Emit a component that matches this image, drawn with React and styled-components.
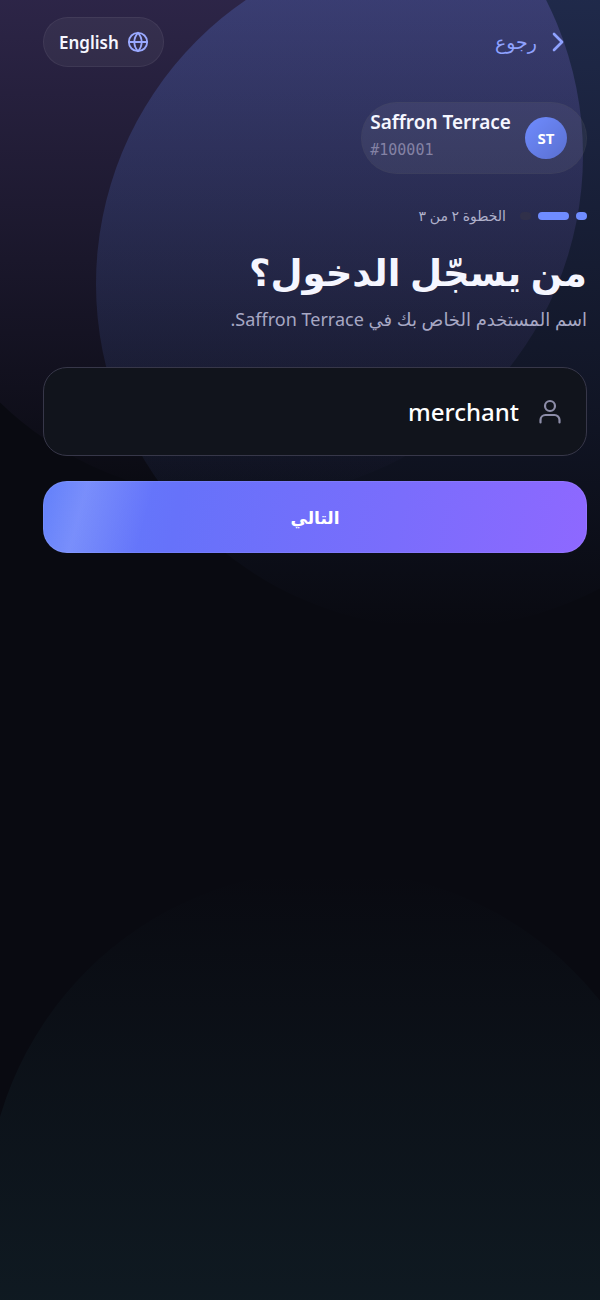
import { useState } from "react";
import styled, { createGlobalStyle } from "styled-components";
import { ChevronRight, Globe } from "lucide-react";

const GlobalStyle = createGlobalStyle`
  * {
    box-sizing: border-box;
  }

  body {
    margin: 0;
    background: #090a11;
    color: #f5f6ff;
    font-family: "Noto Sans", "DejaVu Sans", sans-serif;
  }

  button,
  input {
    font-family: inherit;
  }
`;

const Page = styled.div`
  position: relative;
  min-height: 100vh;
  padding: 17px 13px 40px 43px;
  overflow: hidden;
`;

// Large discs that glow behind the form
const Glow = styled.div`
  position: absolute;
  width: 688px;
  height: 688px;
  border-radius: 50%;
  background: linear-gradient(
    ${(props) => props.$angle || "to bottom"},
    ${(props) => props.$color},
    transparent
  );
  top: ${(props) => props.$top};
  bottom: ${(props) => props.$bottom};
  left: ${(props) => props.$left};
`;

const Content = styled.main`
  position: relative;
  display: flex;
  flex-direction: column;
`;

const Header = styled.header`
  display: flex;
  align-items: center;
  justify-content: space-between;
  height: 50px;
`;

const BackButton = styled.button`
  display: flex;
  align-items: center;
  gap: 5px;
  padding: 0 13px 0 0;
  border: 0;
  background: none;
  color: #8fa2ff;
  font-size: 19px;
  font-weight: 500;
  line-height: 28px;
`;

const LanguageButton = styled.button`
  display: flex;
  align-items: center;
  gap: 8px;
  height: 50px;
  padding: 0 14px 0 15px;
  border: 1px solid rgba(255, 255, 255, 0.06);
  border-radius: 25px;
  background: rgba(255, 255, 255, 0.05);
  color: #f5f6ff;
  font-size: 17px;
  font-weight: 600;

  svg {
    color: #9aa9ff;
  }
`;

const Merchant = styled.section`
  display: flex;
  align-items: center;
  align-self: flex-start;
  gap: 14px;
  height: 72px;
  margin-top: 35px;
  padding: 0 19px 0 8px;
  border: 1px solid rgba(80, 80, 80, 0.16);
  border-radius: 36px;
  background: rgba(255, 255, 255, 0.06);
`;

const Avatar = styled.div`
  display: flex;
  align-items: center;
  justify-content: center;
  width: 42px;
  height: 42px;
  border-radius: 50%;
  background: linear-gradient(135deg, #6f8cff, #5a6fd0);
  color: #fff;
  font-size: 15px;
  font-weight: 700;
`;

const MerchantText = styled.div`
  display: flex;
  flex-direction: column;
  padding-bottom: 5px;
  direction: ltr;
`;

const MerchantName = styled.strong`
  font-size: 19px;
  font-weight: 600;
  line-height: 28px;
`;

const MerchantId = styled.span`
  color: #8482a4;
  font-family: "DejaVu Sans Mono", monospace;
  font-size: 15px;
  line-height: 28px;
`;

const Steps = styled.div`
  display: flex;
  align-items: center;
  gap: 7px;
  height: 24px;
  margin-top: 30px;
`;

const Step = styled.span`
  width: ${(props) => (props.$current ? "31px" : "11px")};
  height: 8px;
  border-radius: 4px;
  background: ${(props) => (props.$done ? "#6f8cff" : "#30304a")};
`;

const StepLabel = styled.span`
  margin-right: 7px;
  color: #b0b1cb;
  font-size: 14px;
  line-height: 24px;
`;

const Title = styled.h1`
  margin: 12px 0 0;
  font-size: 37px;
  font-weight: 700;
  line-height: 64px;
`;

const Subtitle = styled.p`
  margin: 0;
  color: #a7a8c4;
  font-size: 18px;
  line-height: 30px;
`;

const Form = styled.form`
  display: flex;
  flex-direction: column;
  gap: 25px;
  margin-top: 33px;
`;

const Field = styled.label`
  display: flex;
  align-items: center;
  gap: 17px;
  height: 89px;
  padding: 0 22px;
  border: 1px solid #373749;
  border-radius: 24px;
  background: #11141c;

  svg {
    flex: none;
    color: #8d8da8;
  }
`;

const Input = styled.input`
  flex: 1;
  min-width: 0;
  padding: 0;
  border: 0;
  outline: 0;
  background: none;
  color: #fff;
  font-size: 24px;
  font-weight: 500;
  line-height: 36px;
`;

const NextButton = styled.button`
  height: 72px;
  border: 1px solid rgba(255, 255, 255, 0.08);
  border-radius: 24px;
  background:
    linear-gradient(
      105deg,
      rgba(255, 255, 255, 0) 0%,
      rgba(255, 255, 255, 0.14) 8%,
      rgba(255, 255, 255, 0) 20%
    ),
    linear-gradient(100deg, #6280fb, #6672fa 25%, #7a6dfc 65%, #8e68ff);
  background-origin: border-box;
  color: #fff;
  font-size: 17px;
  font-weight: 700;
`;

const steps = [
  { id: 1, done: true },
  { id: 2, done: true, current: true },
  { id: 3 },
];

function PersonIcon() {
  return (
    <svg
      width="28"
      height="28"
      viewBox="0 0 28 28"
      fill="none"
      stroke="currentColor"
      strokeWidth="2.2"
      strokeLinecap="round"
      aria-hidden="true"
    >
      <circle cx="14" cy="8" r="5" />
      <path d="M4.500 24.500v-2.500a5 5 0 0 1 5-5h9a5 5 0 0 1 5 5v2.500" />
    </svg>
  );
}

export default function App() {
  const [username, setUsername] = useState("merchant");

  return (
    <Page dir="rtl" lang="ar">
      <GlobalStyle />
      <Glow $color="rgba(145, 113, 224, 0.36)" $top="-189px" $left="-105px" />
      <Glow $color="rgba(93, 128, 232, 0.29)" $top="-60px" $left="96px" />
      <Glow
        $color="rgba(70, 165, 180, 0.16)"
        $angle="to top"
        $bottom="-258px"
        $left="-14px"
      />
      <Content>
        <Header>
          <BackButton type="button">
            <ChevronRight size={32} strokeWidth={2} />
            رجوع
          </BackButton>
          <LanguageButton type="button" lang="en">
            <Globe size={22} strokeWidth={2} />
            English
          </LanguageButton>
        </Header>

        <Merchant>
          <Avatar>ST</Avatar>
          <MerchantText>
            <MerchantName>Saffron Terrace</MerchantName>
            <MerchantId>#100001</MerchantId>
          </MerchantText>
        </Merchant>

        <Steps>
          {steps.map((step) => (
            <Step key={step.id} $done={step.done} $current={step.current} />
          ))}
          <StepLabel>الخطوة ٢ من ٣</StepLabel>
        </Steps>

        <Title>من يسجّل الدخول؟</Title>
        <Subtitle>اسم المستخدم الخاص بك في Saffron Terrace.</Subtitle>

        <Form onSubmit={(event) => event.preventDefault()}>
          <Field>
            <PersonIcon />
            <Input
              type="text"
              aria-label="اسم المستخدم"
              value={username}
              onChange={(event) => setUsername(event.target.value)}
            />
          </Field>
          <NextButton type="submit">التالي</NextButton>
        </Form>
      </Content>
    </Page>
  );
}
